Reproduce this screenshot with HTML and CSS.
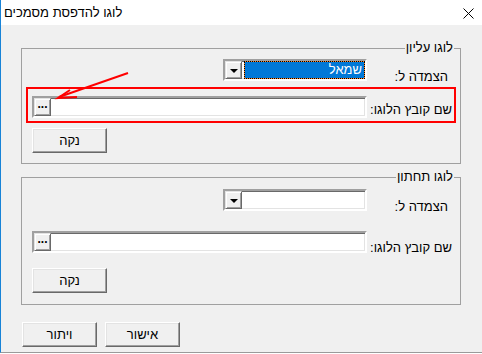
FILE: index.html
```html
<!DOCTYPE html>
<html lang="he">
  <head>
    <meta charset="UTF-8" />
    <meta name="viewport" content="width=device-width, initial-scale=1.0" />
    <title>לוגו להדפסת מסמכים</title>
    <link rel="stylesheet" href="styles.css">
  </head>
  <body>
    <div class="window">
      <!-- Title bar -->
      <div class="titlebar">
        <span class="title">לוגו להדפסת מסמכים</span>
        <svg class="close" width="11" height="11" viewBox="0 0 11 11">
          <path d="M0.5 0.5 L10.5 10.5 M10.5 0.5 L0.5 10.5" stroke="#000" stroke-width="1" fill="none" />
        </svg>
      </div>

      <div class="content" dir="rtl">
        <!-- Top logo group -->
        <fieldset class="group group-top">
          <legend>לוגו עליון</legend>
          <div class="row">
            <label class="field-label label-align">הצמדה ל:</label>
            <div class="combo sunken">
              <span class="combo-value selected">שמאל</span>
              <span class="combo-btn raised"><span class="triangle"></span></span>
            </div>
          </div>
          <div class="row row-file">
            <label class="field-label label-file">שם קובץ הלוגו:</label>
            <div class="file-input sunken">
              <span class="browse-btn raised">...</span>
            </div>
          </div>
          <div class="row row-actions">
            <button class="btn">נקה</button>
          </div>
        </fieldset>

        <!-- Bottom logo group -->
        <fieldset class="group group-bottom">
          <legend>לוגו תחתון</legend>
          <div class="row">
            <label class="field-label label-align">הצמדה ל:</label>
            <div class="combo sunken">
              <span class="combo-value"></span>
              <span class="combo-btn raised"><span class="triangle"></span></span>
            </div>
          </div>
          <div class="row row-file">
            <label class="field-label label-file">שם קובץ הלוגו:</label>
            <div class="file-input sunken">
              <span class="browse-btn raised">...</span>
            </div>
          </div>
          <div class="row row-actions">
            <button class="btn">נקה</button>
          </div>
        </fieldset>

        <!-- Dialog buttons -->
        <div class="dialog-buttons">
          <button class="btn">אישור</button>
          <button class="btn">ויתור</button>
        </div>
      </div>

      <!-- Red annotation drawn over the dialog -->
      <svg class="annotation" width="482" height="354" viewBox="0 0 482 354">
        <rect x="27" y="88" width="428" height="34" fill="none" stroke="#f00" stroke-width="2" />
        <path d="M128 73 L59 97" stroke="#f00" stroke-width="2" fill="none" />
        <path d="M70 90 L58 98 L77 97" stroke="#f00" stroke-width="2" fill="none" />
      </svg>
    </div>
  </body>
</html>
```

FILE: styles.css
```css
/* Page and window frame */
body {
  margin: 0;
  background: #fff;
  font-family: "Liberation Sans", Arial, "DejaVu Sans", sans-serif;
  font-size: 13px;
  color: #000;
}

.window {
  position: relative;
  width: 481px;
  height: 352px;
  border-left: 1px solid #1883d7;
  border-bottom: 1px solid #9a9a9a;
  background: #f0f0f0;
}

/* Title bar */
.titlebar {
  height: 25px;
  background: #fff;
  display: flex;
  align-items: center;
  justify-content: space-between;
  padding: 0 8px 0 3px;
}

.title {
  font-size: 13px;
  line-height: 16px;
}

.close {
  margin-top: 1px;
}

/* Dialog body */
.content {
  padding: 16px 21px 0 20px;
}

/* Group boxes */
.group {
  margin: 0;
  border: 1px solid #a0a0a0;
  padding: 4px 8px 10px 10px;
  min-width: 0;
}

.group legend {
  font-size: 13px;
  line-height: 14px;
  padding: 0 1px;
  margin-right: -2px;
}

.group-bottom {
  margin-top: 6px;
  padding-top: 5px;
  padding-bottom: 11px;
}

.row {
  display: flex;
  align-items: flex-start;
}

.row-file {
  margin-top: 11px;
}

.group-bottom .row-file {
  margin-top: 16px;
}

.row-actions {
  justify-content: flex-end;
  margin-top: 10px;
}

.group-bottom .row-actions {
  margin-top: 12px;
}

/* Labels */
.field-label {
  width: 85px;
  flex-shrink: 0;
  line-height: 16px;
  white-space: nowrap;
}

.label-align {
  padding-right: 4px;
  padding-top: 10px;
  box-sizing: border-box;
}

.label-file {
  padding-top: 6px;
}

.group-bottom .label-file {
  padding-top: 9px;
}

/* 3D borders */
.sunken {
  box-sizing: border-box;
  border: 2px solid;
  border-color: #a0a0a0 #fff #fff #a0a0a0;
  box-shadow: inset 1px 1px #696969, inset -1px -1px #e3e3e3;
  background: #fff;
}

.raised {
  box-sizing: border-box;
  background: #f0f0f0;
  border: 1px solid;
  border-color: #e3e3e3 #696969 #696969 #e3e3e3;
  box-shadow: inset 1px 1px #fff, inset -1px -1px #a0a0a0;
}

/* Combo box */
.combo {
  width: 144px;
  height: 22px;
  display: flex;
}

.combo-value {
  flex: 1;
  margin-left: 2px;
  line-height: 16px;
  padding-right: 2px;
  border: 1px solid transparent;
}

.combo-value.selected {
  color: #fff;
  border: 1px dotted #000;
  background: linear-gradient(#0078d7, #0078d7) padding-box, #ff8728 border-box;
}

.combo-btn {
  width: 17px;
  height: 18px;
  display: flex;
  align-items: center;
  justify-content: center;
}

.triangle {
  width: 0;
  height: 0;
  border-left: 4px solid transparent;
  border-right: 4px solid transparent;
  border-top: 4px solid #000;
  margin-top: 1px;
}

/* File name input with browse button */
.file-input {
  flex: 1;
  height: 22px;
  display: flex;
  justify-content: flex-end;
}

.browse-btn {
  width: 17px;
  height: 18px;
  font-size: 12px;
  font-weight: bold;
  line-height: 11px;
  text-align: center;
  direction: ltr;
}

/* Push buttons */
.btn {
  width: 75px;
  height: 25px;
  margin: 0;
  padding: 0;
  font-family: inherit;
  font-size: 13px;
  color: #000;
  background: #f0f0f0;
  border: 1px solid;
  border-color: #fff #696969 #696969 #fff;
  box-shadow: inset -1px -1px #a0a0a0, inset 1px 1px #e3e3e3;
}

.dialog-buttons {
  display: flex;
  justify-content: flex-end;
  gap: 8px;
  margin-top: 17px;
  padding-left: 1px;
}

/* Annotation overlay */
.annotation {
  position: absolute;
  top: 0;
  left: -1px;
  pointer-events: none;
}
```
